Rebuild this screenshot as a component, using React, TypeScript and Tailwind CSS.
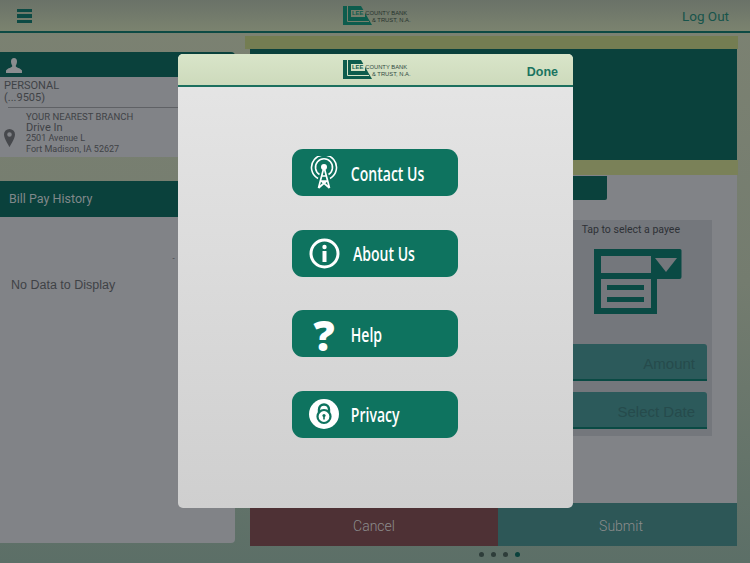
import type { ReactNode } from 'react';

function Logo({ light, ink }: { light: string; ink: string }) {
  return (
    <div className="relative h-[20px] w-[66px] shrink-0">
      <svg width="30" height="20" viewBox="0 0 30 20">
        <path d="M0 0h18l11 19H0z" fill="#0d5c4d" />
        <path d="M4.500 0v15.500H26" fill="none" stroke={light} strokeWidth="1" />
        <rect x="8" y="4" width="14" height="7" fill={light} />
      </svg>
      <div className={`absolute left-[9px] top-[4px] flex flex-col font-['Liberation_Sans',sans-serif] text-[5.800px] leading-[7px] ${ink}`}>
        <span className="whitespace-nowrap">
          <span className="mr-[2px] font-bold text-[#0d5c4d]">LEE</span>COUNTY BANK
        </span>
        <span className="whitespace-nowrap pl-[20px]">&amp; TRUST, N.A.</span>
      </div>
    </div>
  );
}

function TowerIcon() {
  return (
    <svg width="28" height="34" viewBox="0 0 28 34" fill="none" stroke="white">
      <path d="M8 22.500a12.500 12.500 0 1 1 12 0" strokeWidth="1.600" />
      <path d="M9.500 18.500a8.500 8.500 0 1 1 9 0" strokeWidth="1.600" />
      <circle cx="14" cy="11" r="3" fill="white" stroke="none" />
      <path d="M14 11l-5.500 21M14 11l5.500 21M11 20h6M10 25h8M8.500 32l8-7M19.500 32l-8-7" strokeWidth="1.700" />
    </svg>
  );
}

function InfoIcon() {
  return (
    <svg width="31" height="31" viewBox="0 0 31 31">
      <circle cx="15.500" cy="15.500" r="13.500" fill="none" stroke="white" strokeWidth="3" />
      <circle cx="15.500" cy="9" r="2.200" fill="white" />
      <rect x="13.500" y="13" width="4" height="11" fill="white" />
    </svg>
  );
}

function LockIcon() {
  return (
    <svg width="30" height="30" viewBox="0 0 30 30">
      <circle cx="15" cy="15" r="15" fill="white" />
      <path d="M10 14v-3.500a5 5 0 0 1 10 0V14" fill="none" stroke="#0e735f" strokeWidth="2.400" />
      <circle cx="15" cy="17.500" r="6.500" fill="none" stroke="#0e735f" strokeWidth="2.200" />
      <circle cx="15" cy="16.500" r="1.600" fill="#0e735f" />
      <rect x="14.200" y="17" width="1.600" height="3.500" fill="#0e735f" />
    </svg>
  );
}

function PayeeIcon() {
  return (
    <svg width="88" height="65" viewBox="0 0 88 65">
      <path d="M0 0h86a1.500 1.500 0 0 1 1.500 1.500V28a2 2 0 0 1-2 2H63v35H0z" fill="#0a4a44" />
      <rect x="7" y="7" width="50" height="17" fill="#74777c" />
      <rect x="7" y="30" width="50" height="29" fill="#74777c" />
      <rect x="13" y="36" width="37" height="5" fill="#0a4a44" />
      <rect x="13" y="48" width="37" height="5" fill="#0a4a44" />
      <path d="M61 9h22l-11 14z" fill="#74777c" />
    </svg>
  );
}

function MenuButton({ icon, label, gap }: { icon: ReactNode; label: string; gap: string }) {
  return (
    <div className="flex h-[47px] w-[166px] items-center rounded-[11px] bg-[#0e735f] pl-[16px]">
      <div className="flex w-[32px] shrink-0 justify-center">{icon}</div>
      <span className={`${gap} origin-left scale-x-[0.72] whitespace-nowrap pt-[2px] font-['Open_Sans',sans-serif] text-[19.500px] font-semibold text-white`}>
        {label}
      </span>
    </div>
  );
}

export default function App() {
  return (
    <div className="relative h-[563px] w-[750px] overflow-hidden bg-gradient-to-b from-[#7c8272] via-[#747c6f] to-[#5c6f67] font-['Liberation_Sans',sans-serif]">
      <header className="grid h-[33px] grid-cols-[1fr_66px_1fr] items-center border-b-2 border-[#0d4a44] bg-gradient-to-b from-[#6a7268] to-[#7b836f] pl-[17px] pr-[21px]">
        <div className="mt-[1px] flex w-[15px] flex-col gap-[2px]">
          <div className="h-[3.500px] bg-[#0d4a44]" />
          <div className="h-[3.500px] bg-[#0d4a44]" />
          <div className="h-[3.500px] bg-[#0d4a44]" />
        </div>
        <div className="ml-[3px]">
          <Logo light="#767e6c" ink="text-[#26332c]" />
        </div>
        <span className="mt-[1px] text-right font-['Roboto',sans-serif] text-[13.500px] text-[#17544b]">Log Out</span>
      </header>

      <div className="flex">
        {/* left column */}
        <div className="mt-[19px] flex h-[491px] w-[235px] flex-col">
          <div className="flex h-[25px] items-center rounded-tr-[4px] bg-[#0a413c] pl-[6px]">
            <svg width="16" height="16" viewBox="0 0 16 16" fill="#8b8d90">
              <path d="M5 4.500a3 3.500 0 0 1 6 0c0 2-1 3.500-1.300 4.500 0 1.500 4.800 2 6.300 4.500V16H0v-2.500C1.500 11 6.300 10.500 6.300 9 6 8 5 6.500 5 4.500z" />
            </svg>
          </div>
          <div className="h-[80px] bg-[#818387] font-['Roboto',sans-serif] text-[#3f4246]">
            <div className="pl-[4px] pt-[3px] text-[11px] leading-[12px]">
              <div>PERSONAL</div>
              <div>(...9505)</div>
            </div>
            <div className="ml-[8px] mt-[3px] border-t border-[#5f6165]" />
            <div className="flex">
              <div className="flex w-[26px] shrink-0 justify-center pr-[8px] pt-[21px]">
                <svg width="11" height="18" viewBox="0 0 11 18">
                  <path d="M5.500 0A5.500 5.500 0 0 0 0 5.500C0 9.500 5.500 18 5.500 18S11 9.500 11 5.500A5.500 5.500 0 0 0 5.500 0zm0 7.800a2.300 2.300 0 1 1 0-4.600 2.300 2.300 0 0 1 0 4.600z" fill="#46484c" />
                </svg>
              </div>
              <div className="pt-[3px]">
                <div className="text-[9.500px] leading-[11px]">YOUR NEAREST BRANCH</div>
                <div className="text-[11px] leading-[11px]">Drive In</div>
                <div className="text-[9px] leading-[11px]">2501 Avenue L</div>
                <div className="text-[9px] leading-[11px]">Fort Madison, IA 52627</div>
              </div>
            </div>
          </div>
          <div className="h-[24px]" />
          <div className="flex h-[36px] items-center bg-[#0a413c] pl-[9px] font-['Roboto',sans-serif] text-[12.500px] text-[#80888a]">Bill Pay History</div>
          <div className="flex-1 rounded-br-[4px] bg-[#818387]">
            <div className="pr-[60px] pt-[33px] text-right text-[8px] leading-[16px] text-[#3f4246]">-</div>
            <div className="pl-[11px] pt-[10px] text-[12.500px] text-[#3f4246]">No Data to Display</div>
          </div>
        </div>

        {/* right column */}
        <div className="ml-[10px] mt-[3px] w-[494px]">
          <div className="mr-[1px] h-[13px] bg-[#747d52]" />
          <div className="ml-[5px] mr-[2px] h-[111px] bg-[#0a413c]" />
          <div className="mr-[1px] h-[15px] bg-[#7a8158]" />
          <div className="ml-[5px] mr-[2px] flex h-[328px] flex-col bg-[#818387]">
            <div className="mt-[1px] h-[24px] w-[357px] rounded-br-[2px] bg-[#0a413c]" />
            <div className="ml-[10px] mr-[25px] mt-[20px] flex h-[216px] flex-col items-end bg-[#74777c]">
              <div className="mr-[32px] mt-[3px] font-['Roboto',sans-serif] text-[10.500px] leading-[13px] text-[#2e3136]">Tap to select a payee</div>
              <div className="mr-[30px] mt-[13px] flex">
                <PayeeIcon />
              </div>
              <div className="mr-[5px] mt-[30px] flex h-[37px] w-[440px] items-center justify-end rounded-t-[3px] border-b-2 border-[#0a4a44] bg-[#2c5a5b] pr-[12px] pt-[5px] text-[15px] text-[#264b4c]">
                Amount
              </div>
              <div className="mr-[5px] mt-[11px] flex h-[37px] w-[440px] items-center justify-end rounded-t-[3px] border-b-2 border-[#0a4a44] bg-[#2c5a5b] pr-[12px] pt-[5px] text-[15px] text-[#264b4c]">
                Select Date
              </div>
            </div>
          </div>
          <div className="ml-[5px] mr-[2px] flex h-[43px] font-['Roboto',sans-serif] text-[14px] font-light text-[#8c8c8c]">
            <div className="flex w-[248px] items-center justify-center bg-[#4e3135] pt-[3px]">Cancel</div>
            <div className="flex flex-1 items-center justify-center bg-[#2d5757] pl-[7px] pt-[3px]">Submit</div>
          </div>
          <div className="mt-[6px] flex gap-[7px] pl-[234px]">
            <div className="h-[5px] w-[5px] rounded-full bg-[#2e3d3a]" />
            <div className="h-[5px] w-[5px] rounded-full bg-[#2e3d3a]" />
            <div className="h-[5px] w-[5px] rounded-full bg-[#2e3d3a]" />
            <div className="h-[5px] w-[5px] rounded-full bg-[#0a413c]" />
          </div>
        </div>
      </div>

      {/* modal */}
      <div className="absolute left-[178px] top-[54px] flex h-[454px] w-[395px] flex-col overflow-hidden rounded-[5px] bg-gradient-to-b from-[#e6e6e6] to-[#cfcfcf]">
        <div className="relative flex h-[33px] shrink-0 items-center justify-center border-b-2 border-[#1c6f5e] bg-gradient-to-b from-[#d9e5c9] to-[#cddabc]">
          <div className="ml-[1px] mt-[1px]">
            <Logo light="#d5e2c5" ink="text-[#2f4a3f]" />
          </div>
          <span className="absolute right-[15px] top-[9px] text-[12.500px] font-bold text-[#1b7460]">Done</span>
        </div>
        <div className="flex flex-col items-start gap-[33.500px] pl-[114px] pt-[62px]">
          <MenuButton icon={<TowerIcon />} label="Contact Us" gap="pl-[15px]" />
          <MenuButton icon={<InfoIcon />} label="About Us" gap="pl-[18px]" />
          <MenuButton
            icon={<span className="pt-[3px] font-['Open_Sans',sans-serif] text-[42px] font-extrabold leading-none text-white">?</span>}
            label="Help"
            gap="pl-[15px]"
          />
          <MenuButton icon={<LockIcon />} label="Privacy" gap="pl-[15px]" />
        </div>
      </div>
    </div>
  );
}
